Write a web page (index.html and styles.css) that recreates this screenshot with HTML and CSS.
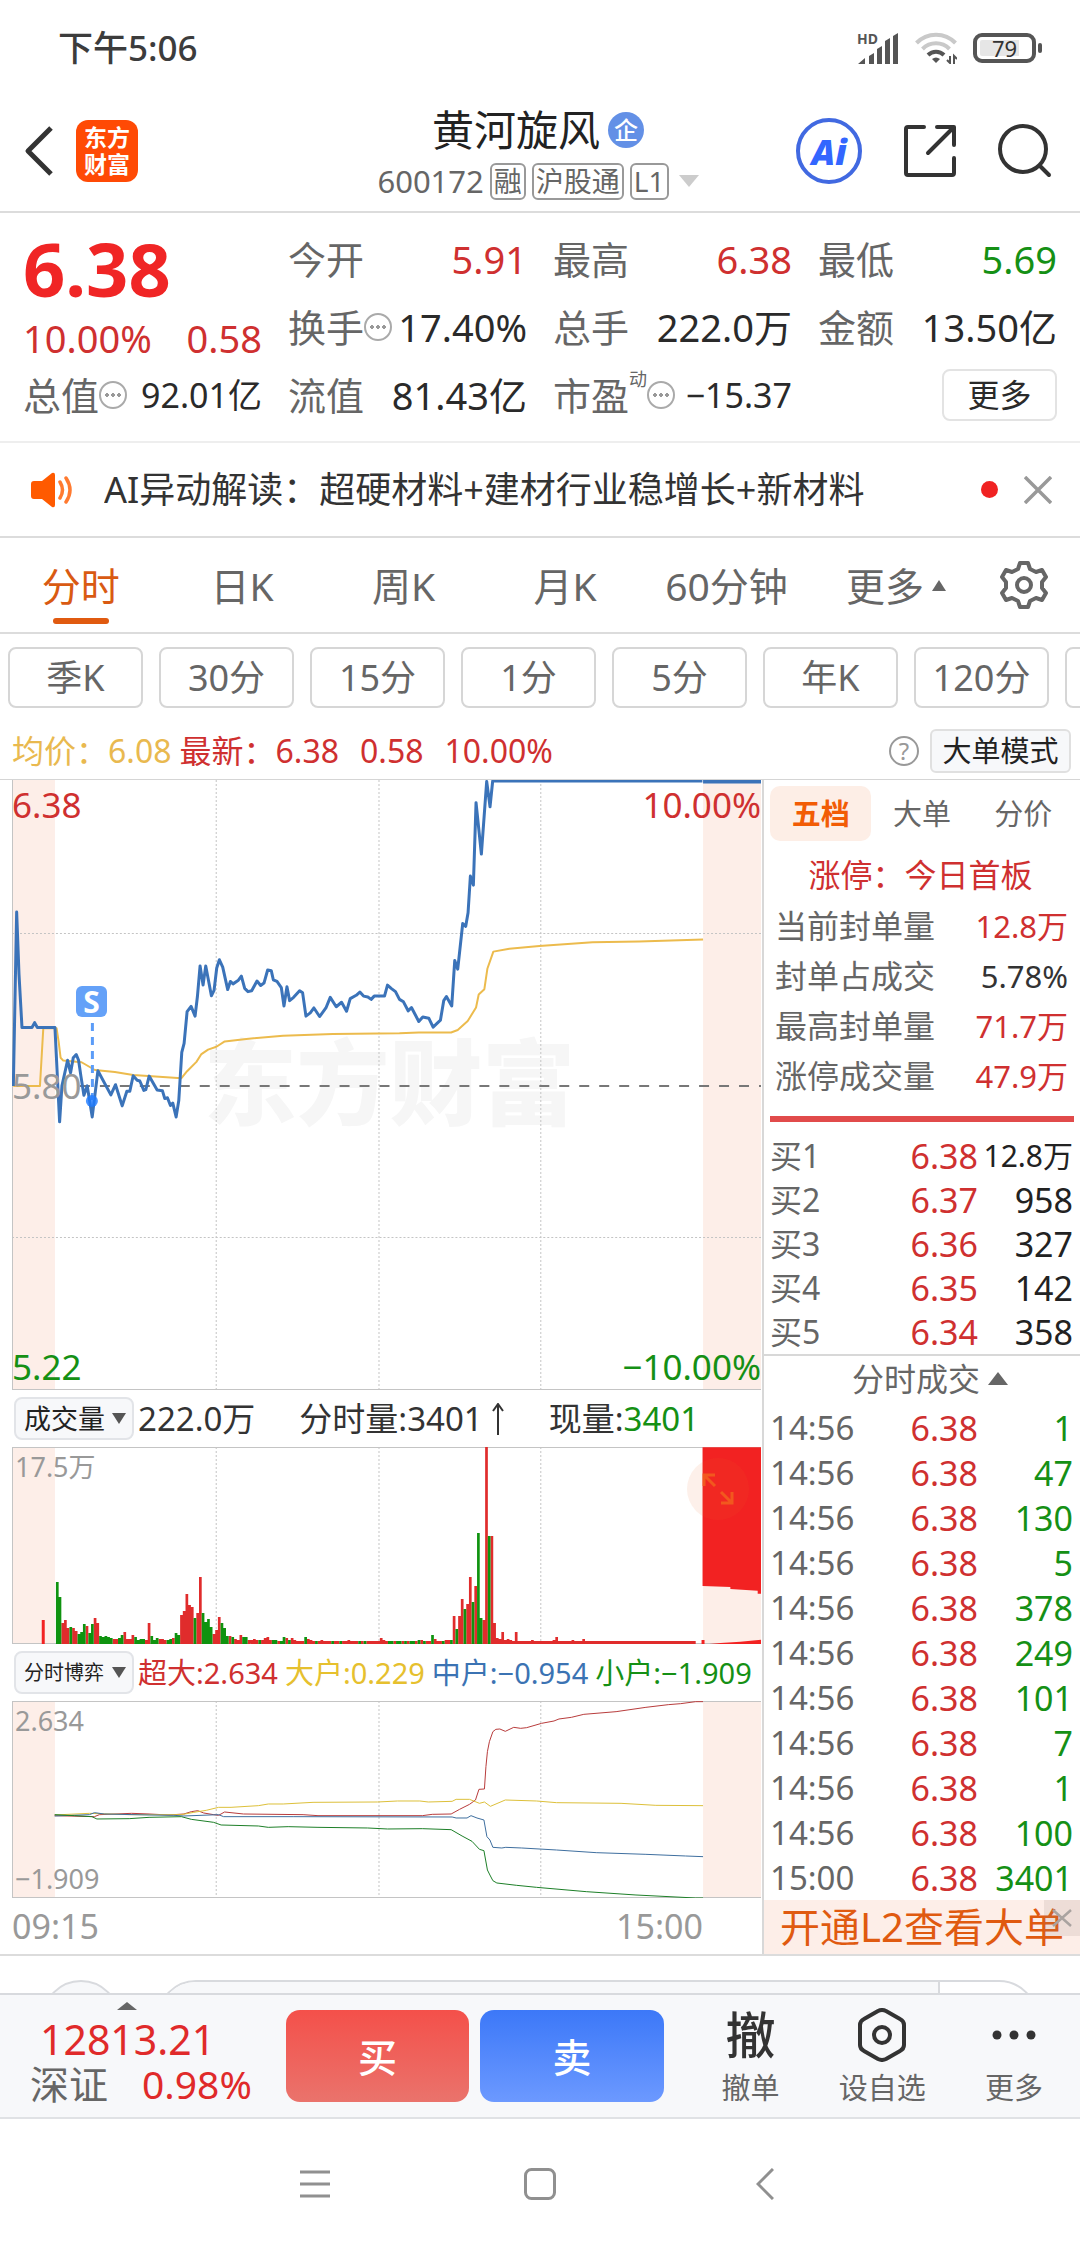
FILE: index.html
```html
<!DOCTYPE html>
<html lang="zh-CN">
<head>
<meta charset="utf-8">
<meta name="viewport" content="width=device-width, initial-scale=1">
<title>黄河旋风 600172</title>
<link rel="stylesheet" href="styles.css">
</head>
<body>
<div class="status">
  <span class="status-time">下午5:06</span>
  <div class="status-icons">
    <svg width="42" height="34" viewBox="0 -2 42 34"><text x="0" y="11" class="hd">HD</text><g fill="#555"><path d="M1 31l7-6v6zM12 31v-8l5-3v11zM20 31V16l5-3v18zM28 31V8l5-3v26zM36 31V3l5-3v31z"/></g></svg>
    <svg width="42" height="32" viewBox="0 0 42 32" fill="none" stroke-width="4"><path d="M1.500 11a27 27 0 0 1 39 0M7.500 17a19 19 0 0 1 27 0" stroke="#c9c9c9"/><path d="M13 23a11.500 11.500 0 0 1 16 0" stroke="#555"/><path d="M17 27q4-3 8 0l-4 4z" fill="#555"/><path d="M35 24v7l-3-3M39 32v-8l3 3" stroke="#555" stroke-width="2"/></svg>
    <div class="battery"><span>79</span></div>
  </div>
</div>

<header class="header">
  <div class="header-left">
    <button class="icon-btn" aria-label="返回"><svg width="30" height="52" viewBox="0 0 30 52" fill="none" stroke="#333" stroke-width="5" stroke-linejoin="round"><path d="M27 3L4 26l23 23"/></svg></button>
    <div class="logo"><span>东方</span><span>财富</span></div>
  </div>
  <div class="header-title">
    <h1>黄河旋风<span class="badge">企</span></h1>
    <div class="code"><span class="code-num">600172</span><span class="tag">融</span><span class="tag">沪股通</span><span class="tag">L1</span><i class="tri-down"></i></div>
  </div>
  <div class="header-right">
    <button class="icon-btn ai">Ai</button>
    <button class="icon-btn" aria-label="分享"><svg width="52" height="52" viewBox="0 0 52 52" fill="none" stroke="#333" stroke-width="4" stroke-linecap="round" stroke-linejoin="round"><path d="M20 2H4a2 2 0 0 0-2 2v44a2 2 0 0 0 2 2h44a2 2 0 0 0 2-2V33M33 2h17v18M49 3L24 28"/></svg></button>
    <button class="icon-btn" aria-label="搜索"><svg width="54" height="54" viewBox="0 0 54 54" fill="none" stroke="#333" stroke-width="4" stroke-linecap="round"><circle cx="25" cy="25" r="23"/><path d="M42 42l9 9"/></svg></button>
  </div>
</header>

<section class="quote">
  <div class="price-box">
    <div class="price">6.38</div>
    <div class="change"><span>10.00%</span><span>0.58</span></div>
  </div>
  <div class="cell"><span class="k">今开</span><span class="v red">5.91</span></div>
  <div class="cell"><span class="k">最高</span><span class="v red">6.38</span></div>
  <div class="cell"><span class="k">最低</span><span class="v green">5.69</span></div>
  <div class="cell"><span class="k">换手</span><i class="info"></i><span class="v">17.40%</span></div>
  <div class="cell"><span class="k">总手</span><span class="v">222.0万</span></div>
  <div class="cell"><span class="k">金额</span><span class="v">13.50亿</span></div>
  <div class="cell"><span class="k">总值</span><i class="info"></i><span class="v small">92.01亿</span></div>
  <div class="cell"><span class="k">流值</span><span class="v">81.43亿</span></div>
  <div class="cell"><span class="k">市盈</span><span class="sup">动</span><i class="info"></i><span class="v small">−15.37</span></div>
  <div class="cell cell-end"><button class="more-btn">更多</button></div>
</section>

<section class="news">
  <svg width="42" height="36" viewBox="0 0 42 36"><path d="M3 9h8L21 1q3-1 3 2v30q0 3-3 2L11 27H3q-3 0-3-3V12q0-3 3-3z" fill="#ff5a00"/><path d="M29 10q5 8 0 16M35 6q8 12 0 24" fill="none" stroke="#ff7a30" stroke-width="3.500" stroke-linecap="round"/></svg>
  <a class="news-text" href="#">AI异动解读：超硬材料+建材行业稳增长+新材料</a>
  <i class="dot"></i>
  <button class="icon-btn" aria-label="关闭"><svg width="28" height="28" viewBox="0 0 28 28" stroke="#999" stroke-width="3.500"><path d="M1 1l26 26M27 1L1 27"/></svg></button>
</section>

<nav class="tabs">
  <button class="tab active">分时</button>
  <button class="tab">日K</button>
  <button class="tab">周K</button>
  <button class="tab">月K</button>
  <button class="tab">60分钟</button>
  <button class="tab tab-more">更多<i class="tri-up small-tri"></i></button>
  <button class="tab gear" aria-label="设置"><svg width="48" height="50" viewBox="0 0 48 50" fill="none" stroke="#666" stroke-width="4" stroke-linejoin="round"><path d="M20 3h8l2 6 6 3 6-2 4 7-4 5v6l4 5-4 7-6-2-6 3-2 6h-8l-2-6-6-3-6 2-4-7 4-5v-6l-4-5 4-7 6 2 6-3z"/><circle cx="24" cy="25" r="7"/></svg></button>
</nav>

<div class="chips">
  <button class="chip">季K</button><button class="chip">30分</button><button class="chip">15分</button><button class="chip">1分</button><button class="chip">5分</button><button class="chip">年K</button><button class="chip">120分</button><button class="chip" aria-label="更多周期"></button>
</div>

<div class="legend">
  <span class="gold">均价：6.08</span>
  <span class="red legend-last"><span>最新：6.38</span><span>0.58</span><span>10.00%</span></span>
  <span class="help">?</span>
  <button class="mode-btn">大单模式</button>
</div>

<main class="main">
  <section class="left">
    <div class="plot plot-price">
      <svg viewBox="0 0 750 610" preserveAspectRatio="none">
        <rect x="0" y="0" width="43" height="610" fill="#fdeee8"/><rect x="692" y="0" width="58" height="610" fill="#fdeee8"/>
        <text x="192" y="338" class="watermark">东方财富</text>
        <path class="grid" d="M0 153.500H750M0 457.500H750M204.500 0V610M367.500 0V610M529.500 0V610"/>
        <path d="M68 306H750" stroke="#777" stroke-width="2" stroke-dasharray="10 10"/>
        <path class="frame" d="M.5 0V610"/><path class="frame" d="M0 609.500H750"/>
        <g transform="translate(-12 -10) scale(.33333 .40816)" fill="none">
          <path class="line" stroke="#ecbb4d" stroke-width="2" d="M40 774L120 774 130 633 170 633 176 665 182 705 190 712 245 716 285 735 345 740 400 747 545 755 562 738 590 715 605 696 625 685 650 678 675 665 740 659 850 651 1000 647 1200 645 1258 643 1355 643 1375 637 1405 615 1430 582 1438 550 1455 537 1464 487 1482 445 1530 438 1620 431 1780 422 1920 420 2040 417 2112 415"/>
          <path class="line" stroke="#3b73b9" stroke-width="3" d="M40 774L50 348 57 500 66 631 96 631 104 619 112 631 165 631 179 862 186 774 203 711 212 742 220 705 229 697 236 711 243 750 252 797 262 774 277 850 294 737 333 796 347 771 367 823 381 787 390 787 400 749 412 760 420 762 432 785 438 783 448 750 472 784 488 786 495 805 503 803 512 822 519 816 529 850 537 810 546 692 553 670 562 592 574 579 586 603 593 555 601 480 610 527 618 480 635 553 643 540 651 485 659 465 669 483 684 538 692 518 700 524 715 516 725 505 735 535 745 543 756 541 772 517 783 528 793 522 804 490 815 492 821 514 832 518 845 533 853 578 862 531 870 565 882 557 900 541 909 546 919 603 932 595 943 583 960 604 979 583 992 557 1010 580 1026 569 1041 591 1052 560 1070 552 1081 544 1092 554 1105 556 1115 562 1124 554 1155 554 1164 527 1175 535 1188 543 1200 562 1212 568 1226 590 1236 582 1258 616 1270 605 1288 608 1301 630 1323 613 1333 565 1341 555 1357 578 1366 467 1375 488 1390 376 1399 383 1406 350 1413 260 1422 282 1430 80 1446 206 1462 28 1472 90 1480 27 2110 27"/>
        </g>
        <path d="M692 1.500H750" stroke="#3b73b9" stroke-width="4"/>
        <path d="M80.500 243V320" stroke="#5b9cf8" stroke-width="3" stroke-dasharray="8 6"/><circle cx="80" cy="321" r="6" fill="#1e7bff" opacity=".8"/>
      </svg>
      <span class="axis tl red">6.38</span><span class="axis tr red">10.00%</span>
      <span class="axis ml">5.80</span>
      <span class="axis bl green">5.22</span><span class="axis br green">−10.00%</span>
      <span class="sell-mark">S</span>
    </div>

    <div class="sub-head">
      <button class="select-btn">成交量<i class="tri-dark"></i></button>
      <div class="vol-info"><span>222.0万</span><span>分时量:3401<svg width="14" height="32" viewBox="0 0 14 32" fill="none" stroke="#333" stroke-width="2"><path d="M7 32V1M2 8l5-7 5 7"/></svg></span><span>现量:<b class="green">3401</b></span></div>
    </div>
    <div class="plot plot-sub">
      <svg viewBox="0 0 750 197" preserveAspectRatio="none">
        <rect x="0" y="0" width="43" height="197" fill="#fdeee8"/><rect x="692" y="0" width="58" height="197" fill="#fdeee8"/>
        <path class="grid" d="M204.500 0V197M367.500 0V197M529.500 0V197"/>
        <path class="frame" d="M.5 0V197M0 .5H750M0 196.500H750"/>
        <path id="bars-up" fill="#e02c2c"/><path id="bars-down" fill="#0f930f"/>
        <g transform="translate(-12 -67) scale(.4975 .33333)" fill="#f22222">
          <path d="M1414 202V618L1470 621V627L1525 632V641H1533V202zM1420 793L1450 789 1490 785 1533 779V793zM84 793V720h6V793zM1412 793V780h6V793z"/>
        </g>
      </svg>
      <span class="axis-note top">17.5万</span>
      <button class="expand" aria-label="全屏"><svg width="32" height="32" viewBox="0 0 32 32" fill="none" stroke="#f2661e" stroke-width="3"><path d="M13 13L2 2M2 13V2h11M19 19l11 11M19 30h11V19"/></svg></button>
    </div>

    <div class="sub-head">
      <button class="select-btn tight">分时博弈<i class="tri-dark"></i></button>
      <div class="game-info"><span class="red">超大:2.634</span><span class="yellow">大户:0.229</span><span class="blue">中户:−0.954</span><span class="green">小户:−1.909</span></div>
    </div>
    <div class="plot plot-sub">
      <svg viewBox="0 0 750 197" preserveAspectRatio="none">
        <rect x="0" y="0" width="43" height="197" fill="#fdeee8"/><rect x="692" y="0" width="58" height="197" fill="#fdeee8"/>
        <path class="grid" d="M204.500 0V197M367.500 0V197M529.500 0V197"/>
        <path class="frame" d="M.5 0V197M0 .5H750M0 196.500H750"/>
        <g transform="translate(-12 -61) scale(.4975 .33333)" fill="none">
          <path class="line" stroke="#b83c3c" d="M110 527L190 530 200 524 265 520 300 522 340 525 370 522 385 515 398 512 410 519 430 524 440 526 452 516 490 522 610 524 640 527 850 527 870 523 908 522 925 508 945 493 957 480 964 448 975 447 978 380 981 335 985 305 992 275 998 268 1006 267 1017 274 1034 262 1048 265 1060 263 1090 250 1115 243 1125 237 1150 232 1175 223 1240 215 1300 202 1345 194 1370 191 1400 185 1415 185"/>
          <path class="line" stroke="#ddc03a" d="M110 525L180 520 260 524 365 524 390 517 415 511 440 502 465 502 520 497 540 492 570 492 630 487 760 486 800 483 845 483 862 486 910 484 918 478 945 478 965 490 975 486 987 499 1017 480 1080 483 1120 488 1250 490 1320 496 1415 497"/>
          <path class="line" stroke="#3f6f9f" d="M110 528L180 524 190 518 210 522 300 525 350 526 370 528 440 524 450 530 590 530 910 531 918 534 940 534 948 527 960 534 974 540 980 590 986 600 992 622 1010 624 1018 622 1050 624 1120 630 1200 638 1300 643 1380 648 1415 650"/>
          <path class="line" stroke="#1d7f28" d="M110 524L150 527 185 530 195 537 260 536 300 532 365 530 385 538 430 547 445 555 520 558 540 562 580 560 640 562 740 564 780 567 850 566 908 569 930 588 950 604 965 628 974 632 981 690 986 705 992 722 1000 729 1040 736 1080 742 1180 755 1280 765 1400 774 1415 774"/>
        </g>
      </svg>
      <span class="axis-note top">2.634</span><span class="axis-note bottom">−1.909</span>
    </div>
    <div class="time-axis"><span>09:15</span><span>15:00</span></div>
  </section>

  <aside class="right">
    <div class="depth-tabs"><button class="depth-tab active">五档</button><button class="depth-tab">大单</button><button class="depth-tab">分价</button></div>
    <div class="limit">涨停：今日首板</div>
    <table class="seal">
      <tr><th>当前封单量</th><td class="red">12.8万</td></tr>
      <tr><th>封单占成交</th><td>5.78%</td></tr>
      <tr><th>最高封单量</th><td class="red">71.7万</td></tr>
      <tr><th>涨停成交量</th><td class="red">47.9万</td></tr>
    </table>
    <div class="bar"></div>
    <table class="bids">
      <tr><th>买1</th><td class="red">6.38</td><td class="long">12.8万</td></tr>
      <tr><th>买2</th><td class="red">6.37</td><td>958</td></tr>
      <tr><th>买3</th><td class="red">6.36</td><td>327</td></tr>
      <tr><th>买4</th><td class="red">6.35</td><td>142</td></tr>
      <tr><th>买5</th><td class="red">6.34</td><td>358</td></tr>
    </table>
    <button class="ticks-head">分时成交<i class="tri-up"></i></button>
    <table class="ticks">
      <tr><th>14:56</th><td class="red">6.38</td><td class="green">1</td></tr>
      <tr><th>14:56</th><td class="red">6.38</td><td class="green">47</td></tr>
      <tr><th>14:56</th><td class="red">6.38</td><td class="green">130</td></tr>
      <tr><th>14:56</th><td class="red">6.38</td><td class="green">5</td></tr>
      <tr><th>14:56</th><td class="red">6.38</td><td class="green">378</td></tr>
      <tr><th>14:56</th><td class="red">6.38</td><td class="green">249</td></tr>
      <tr><th>14:56</th><td class="red">6.38</td><td class="green">101</td></tr>
      <tr><th>14:56</th><td class="red">6.38</td><td class="green">7</td></tr>
      <tr><th>14:56</th><td class="red">6.38</td><td class="green">1</td></tr>
      <tr><th>14:56</th><td class="red">6.38</td><td class="green">100</td></tr>
      <tr><th>15:00</th><td class="red">6.38</td><td class="green">3401</td></tr>
    </table>
    <div class="promo"><a href="#">开通L2查看大单</a><button class="promo-close" aria-label="关闭"><svg width="20" height="18" viewBox="0 0 20 18" stroke="#a9a3a0" stroke-width="2.500"><path d="M1 1l18 16M19 1L1 17"/></svg></button></div>
  </aside>
</main>

<div class="peek"><div class="peek-circle"></div><div class="peek-pill"><div class="peek-fill"></div></div></div>

<footer class="trade">
  <div class="index">
    <i class="tri-up index-tri"></i>
    <div class="index-value">12813.21</div>
    <div class="index-row"><span>深证</span><span class="index-pct">0.98%</span></div>
  </div>
  <div class="trade-btns"><button class="buy">买</button><button class="sell">卖</button></div>
  <div class="actions">
    <button class="action"><span class="action-icon">撤</span><span>撤单</span></button>
    <button class="action"><span class="action-icon"><svg width="48" height="54" viewBox="0 0 48 54" fill="none" stroke="#333" stroke-width="4" stroke-linejoin="round"><path d="M20 3q4-2 8 0l14 8q4 2 4 6v20q0 4-4 6l-14 8q-4 2-8 0L6 43q-4-2-4-6V17q0-4 4-6z"/><circle cx="24" cy="27" r="8"/></svg></span><span>设自选</span></button>
    <button class="action"><span class="action-icon"><svg width="44" height="10" viewBox="0 0 44 10" fill="#333"><circle cx="5" cy="5" r="4.500"/><circle cx="22" cy="5" r="4.500"/><circle cx="39" cy="5" r="4.500"/></svg></span><span>更多</span></button>
  </div>
</footer>

<nav class="sys-nav">
  <button class="icon-btn" aria-label="菜单"><svg width="30" height="32" viewBox="0 0 30 32" stroke="#909090" stroke-width="3"><path d="M0 4h30M0 16h30M0 28h30"/></svg></button>
  <button class="icon-btn" aria-label="主屏"><svg width="32" height="32" viewBox="0 0 32 32" fill="none" stroke="#909090" stroke-width="3"><rect x="1.500" y="1.500" width="29" height="29" rx="6"/></svg></button>
  <button class="icon-btn" aria-label="后退"><svg width="18" height="32" viewBox="0 0 18 32" fill="none" stroke="#909090" stroke-width="3"><path d="M17 1L2 16l15 15"/></svg></button>
</nav>
<script src="chart.js"></script>
</body>
</html>
```
FILE: chart.js
```js
// Minute volumes: positive values close up, negative values close down.
const volumes = [
  -62, -47, 21, 24, 16, -17, 16, 13, -10, -12, -20, 18, -11, -20, 26, 21, -8, -7, -8, -7,
  -6, 5, 5, -6, -9, 12, 5, 5, 9, -7, -4, -5, -5, 4, 21, -8, -4, -6, 5, 5,
  4, -4, -5, 6, -11, -9, 29, 33, 50, 39, 37, -26, 31, 67, -31, -22, -25, -17, 10, 14,
  27, -21, -16, -8, 8, -7, 5, 4, 9, -7, -7, 4, 4, 5, 4, -4, 4, 6, 7, 4,
  -4, -4, 3, -3, -7, 6, -4, 6, 4, 3, 3, 3, -7, 5, 4, 3, -3, 3, 4, 3,
  3, 3, -3, 3, 3, -3, 3, 3, 4, 3, 3, 3, -3, 3, -3, 3, 3, 3, 3, 3,
  6, 4, 3, -3, -3, 3, -3, -3, 3, -3, 3, -3, -3, 3, -4, 4, -3, 3, 3, -9,
  5, 3, 3, -3, 4, 4, -4, 28, -15, 28, 45, -35, 40, 67, -42, 58, -111, -26, 24, 197,
  -108, 108, 21, 6, 5, 12, 4, 5, 4, 3, 12, 3, 3, 3, 3, 3, 4, 3, 3, 3,
  3, 3, 3, 3, 4, 7, 3, 3, 3, 3, 3, 4, 3, 3, 3, 5, 3, 3, 3, 3,
  3, 3, 3, 3, 3, 3, 3, 3, 3, 3, 3, 3, 3, 3, 3, 3, 3, 3, 3, 3,
  3, 3, 3, 3, 3, 3, 3, 3, 3, 3, 3, 3, 3, 3, 3, 3, 3
];
const pitch = 2.703;
let up = "", down = "";
volumes.forEach((v, i) => {
  const h = Math.abs(v);
  const bar = `M${(44 + i * pitch).toFixed(2)} 197v${-h}h2.700v${h}z`;
  if (v > 0) up += bar; else down += bar;
});
document.getElementById("bars-up").setAttribute("d", up);
document.getElementById("bars-down").setAttribute("d", down);
```
FILE: styles.css
```css
* { box-sizing: border-box; }
body { margin: 0; background: #fff; color: #333; font-family: "Noto Sans", "Noto Sans CJK SC", sans-serif; font-size: 32px; line-height: 1; overflow-x: hidden; }
button { font: inherit; color: inherit; background: none; border: 0; padding: 0; margin: 0; }
a { color: inherit; text-decoration: none; }
svg { display: block; flex: none; }
table { border-collapse: collapse; width: 100%; }
th, td { padding: 0; font-weight: 400; }
.red { color: #cf3030; }
.green { color: #159015; font-weight: 400; }
.gold { color: #e9b94f; }
.yellow { color: #e6c02e; }
.blue { color: #3b73b3; }
.icon-btn { display: flex; align-items: center; justify-content: center; }

/* status bar */
.status { height: 100px; padding: 0 39px 5px 58px; display: flex; align-items: center; justify-content: space-between; }
.status-time { font-size: 35px; font-weight: 500; color: #3c3c3c; }
.status-icons { display: flex; align-items: center; gap: 16px; }
.hd { font-size: 14px; font-weight: 700; fill: #555; }
.battery { position: relative; width: 63px; height: 30px; margin-right: 5px; padding: 3px; border: 4px solid #555; border-radius: 9px; display: flex; align-items: center; justify-content: center; font-size: 22px; background: linear-gradient(90deg, #e6e6e6 79%, #fff 79%) content-box; }
.battery::after { content: ""; position: absolute; right: -10px; top: 6px; width: 4px; height: 10px; border-radius: 2px; background: #555; }

/* header */
.header { display: grid; grid-template-columns: 1fr auto 1fr; align-items: center; height: 113px; padding: 0 28px 0 24px; border-bottom: 2px solid #dcdcdc; }
.header-left { display: flex; align-items: center; gap: 22px; padding-bottom: 9px; }
.logo { width: 62px; height: 62px; border-radius: 12px; background: #ff4a05; color: #fff; font-size: 23px; line-height: 27px; font-weight: 700; display: flex; flex-direction: column; align-items: center; justify-content: center; }
.header-title { display: flex; flex-direction: column; align-items: center; gap: 12px; padding-bottom: 3px; }
h1 { margin: 0; font-size: 42px; line-height: 42px; font-weight: 400; color: #222; display: flex; align-items: center; gap: 8px; }
.badge { width: 36px; height: 36px; border-radius: 50%; background: #6390e6; color: #fff; font-size: 24px; line-height: 36px; text-align: center; font-weight: 500; }
.code { display: flex; align-items: center; gap: 6px; color: #666; }
.code-num { font-size: 31px; }
.tag { border: 2px solid #999; border-radius: 6px; font-size: 28px; height: 37px; line-height: 33px; padding: 0 2px; }
.tri-down { border: 10px solid transparent; border-top: 12px solid #ccc; border-bottom: 0; margin-left: 4px; }
.header-right { display: flex; align-items: center; justify-content: flex-end; gap: 42px; padding-bottom: 9px; }
.ai { width: 66px; height: 66px; border: 4px solid #4169e1; border-radius: 50%; color: #3366ff; font-size: 35px; font-weight: 900; font-style: italic; }

/* quote grid */
.quote { display: grid; grid-template-columns: repeat(4, minmax(0, 1fr)); grid-auto-rows: 68px; column-gap: 26px; padding: 12px 23px 12px; border-bottom: 2px solid #eee; }
.price-box { grid-row: span 2; display: flex; flex-direction: column; justify-content: space-between; padding: 7px 0 4px; }
.price { font-size: 74px; line-height: 74px; font-weight: 700; color: #f02525; }
.change { display: flex; justify-content: space-between; font-size: 38px; line-height: 38px; color: #cf3030; }
.cell { display: flex; align-items: center; font-size: 38px; color: #2a2a2a; white-space: nowrap; }
.k { color: #666; }
.v { margin-left: auto; }
.v.red { color: #cf3030; }
.v.green { color: #159015; }
.small { font-size: 34px; }
.info { flex: none; width: 28px; height: 28px; border: 2px solid #aaa; border-radius: 50%; background: radial-gradient(circle at 6px 12px, #999 2px, transparent 2px), radial-gradient(circle at 12px 12px, #999 2px, transparent 2px), radial-gradient(circle at 18px 12px, #999 2px, transparent 2px); }
.sup { align-self: flex-start; font-size: 18px; line-height: 36px; color: #666; }
.cell-end { justify-content: flex-end; }
.more-btn { width: 115px; height: 52px; border: 2px solid #e3e3e3; border-radius: 8px; font-size: 32px; }

/* news */
.news { display: flex; align-items: center; height: 95px; padding: 0 28px 0 31px; border-bottom: 2px solid #dcdcdc; font-size: 36px; }
.news-text { margin-left: 31px; flex: 1; white-space: nowrap; overflow: hidden; line-height: 48px; }
.dot { width: 17px; height: 17px; border-radius: 50%; background: #f02222; margin-right: 26px; }

/* period tabs */
.tabs { display: grid; grid-template-columns: repeat(6, minmax(0, 161fr)) minmax(0, 111fr); height: 96px; border-bottom: 2px solid #dcdcdc; font-size: 39px; color: #666; }
.tab { position: relative; display: flex; align-items: center; justify-content: center; white-space: nowrap; }
.tab.active { color: #d95a12; }
.tab.active::after { content: ""; position: absolute; bottom: 8px; width: 56px; height: 6px; border-radius: 3px; background: #e05a10; }
.tab-more { padding-left: 16px; }
.tri-up { border: 10px solid transparent; border-bottom: 13px solid #666; border-top: 0; margin-left: 8px; }
.small-tri { border-width: 0 7px 11px; }

.chips { display: flex; gap: 16px; padding: 13px 0 0 8px; overflow: hidden; }
.chip { flex: none; width: 135px; height: 61px; border: 2px solid #d6d6d6; border-radius: 8px; font-size: 36px; color: #666; }

.legend { display: flex; align-items: center; height: 72px; padding: 14px 9px 0 12px; border-bottom: 1px solid #d5d5d5; white-space: nowrap; }
.legend-last { display: flex; gap: 21px; margin-left: 8px; }
.help { margin-left: auto; width: 30px; height: 30px; border: 2px solid #999; border-radius: 50%; color: #999; font-size: 24px; line-height: 26px; text-align: center; }
.mode-btn { margin-left: 11px; width: 141px; height: 44px; border: 2px solid #e0e0e0; border-radius: 6px; background: #f7f8fa; font-size: 29px; color: #222; }

/* charts */
.main { display: grid; grid-template-columns: minmax(0, 764fr) minmax(0, 316fr); border-bottom: 2px solid #dcdcdc; }
.left { padding: 0 1px 0 12px; border-right: 2px solid #d8d8d8; }
.plot { position: relative; }
.plot > svg { width: 100%; height: 100%; }
.plot-price { height: 610px; }
.plot-sub { height: 197px; }
.grid { stroke: #c4c4c4; stroke-width: 1; stroke-dasharray: 2 2; fill: none; }
.frame { stroke: #c4c4c4; stroke-width: 1; fill: none; }
.line { vector-effect: non-scaling-stroke; stroke-linejoin: round; }
.watermark { font-size: 93px; font-weight: 900; fill: #f6f6f6; }
.axis { position: absolute; font-size: 35px; line-height: 42px; }
.tl, .bl, .ml { left: 0; }
.tr, .br { right: 0; }
.tl, .tr { top: 4px; }
.bl, .br { bottom: 2px; }
.ml { top: 285px; color: #999; }
.sell-mark { position: absolute; left: 64px; top: 206px; width: 31px; height: 31px; border-radius: 6px; background: #64a1f8; color: #fff; font-size: 30px; line-height: 31px; font-weight: 700; text-align: center; }
.sub-head { display: flex; align-items: center; height: 57px; white-space: nowrap; }
.select-btn { flex: none; width: 120px; height: 43px; margin: 0 4px 0 2px; border: 2px solid #e2e4e8; border-radius: 8px; background: #f7f8fa; display: flex; align-items: center; justify-content: space-between; padding: 0 6px 0 8px; font-size: 27px; color: #222; }
.select-btn.tight { font-size: 20px; }
.tri-dark { border: 7px solid transparent; border-top: 11px solid #555; border-bottom: 0; }
.vol-info { flex: 1; display: flex; gap: 44px; font-size: 33px; }
.vol-info span { display: flex; align-items: center; }
.vol-info svg { margin-left: 8px; }
.game-info { flex: 1; display: flex; gap: 7px; font-size: 29px; }
.axis-note { position: absolute; left: 3px; color: #999; font-size: 27px; line-height: 32px; }
.top { top: 4px; }
.bottom { bottom: 3px; }
.expand { position: absolute; right: 12px; top: 11px; width: 62px; height: 62px; border-radius: 50%; background: rgba(240, 110, 40, .12); display: flex; align-items: center; justify-content: center; opacity: .8; }
.time-axis { display: flex; justify-content: space-between; height: 56px; align-items: center; padding-right: 58px; font-size: 34px; color: #999; }

/* order book */
.depth-tabs { display: grid; grid-template-columns: repeat(3, 1fr); margin: 6px 6px 0 6px; font-size: 29px; color: #666; }
.depth-tab { height: 55px; border-radius: 10px; }
.depth-tab.active { background: #fdeee6; color: #f25c05; font-weight: 700; }
.limit { text-align: center; color: #cf3030; line-height: 40px; padding: 14px 3px 6px 0; }
.seal { width: auto; margin: 0 12px 0 11px; min-width: calc(100% - 23px); }
.seal tr { height: 50px; }
.seal th { text-align: left; color: #666; font-size: 32px; }
.seal td { text-align: right; font-size: 31px; }
.bar { height: 6px; margin: 15px 6px 12px; background: #e14b4b; }
.bids { table-layout: fixed; }
.bids tr { height: 44px; }
.bids th, .ticks th { width: 35%; text-align: left; color: #666; padding-left: 6px; }
.bids td, .ticks td { text-align: right; font-size: 34px; padding-right: 7px; }
.bids td:nth-child(2), .ticks td:nth-child(2) { width: 34%; padding-right: 4px; }
.bids td:last-child { color: #222; }
.bids .long { font-size: 30px; white-space: nowrap; padding-left: 0; }
.ticks-head { display: flex; width: 100%; height: 51px; align-items: center; justify-content: center; border-top: 2px solid #d8d8d8; color: #666; padding: 0 0 4px 16px; }
.ticks { table-layout: fixed; }
.ticks tr { height: 45px; }
.ticks th { font-size: 33px; }
.promo { position: relative; height: 54px; background: #fdeee8; color: #e05a10; font-size: 40px; line-height: 54px; text-align: center; white-space: nowrap; }
.promo-close { position: absolute; right: 0; top: 0; width: 36px; height: 36px; background: rgba(150, 130, 120, .15); display: flex; align-items: center; justify-content: center; }

/* comment bar, cut off by the trade bar */
.peek { display: flex; gap: 37px; height: 37px; padding: 24px 42px 0; overflow: hidden; }
.peek-circle { flex: none; width: 78px; height: 78px; border-radius: 50%; border: 2px solid #d8dade; background: #f7f8fa; }
.peek-pill { flex: 1; height: 78px; border-radius: 39px; border: 2px solid #d8dade; overflow: hidden; }
.peek-fill { width: 89%; height: 100%; background: #f7f8fa; border-right: 2px solid #d8dade; }

.trade { display: flex; align-items: center; height: 126px; background: #f7f8fa; border-top: 2px solid #d8dade; border-bottom: 2px solid #e0e2e5; }
.index { position: relative; width: 26%; height: 100%; padding: 20px 29px 0 30px; display: flex; flex-direction: column; align-items: stretch; color: #e02a2a; }
.index-tri { position: absolute; left: 117px; top: 7px; margin: 0; border-width: 0 10px 8px; }
.index-value { font-size: 41px; line-height: 48px; padding-left: 10px; }
.index-row { display: flex; justify-content: space-between; font-size: 39px; line-height: 42px; color: #666; }
.index-pct { color: #e02a2a; }
.trade-btns { width: 36%; display: grid; grid-template-columns: 1fr 1fr; gap: 11px; padding: 0 6px 0 5px; }
.trade-btns button { height: 92px; border-radius: 14px; color: #fff; font-size: 39px; font-weight: 500; }
.buy { background: linear-gradient(#f4504a, #ea736c); }
.sell { background: linear-gradient(#3c78f8, #6c99ff); }
.actions { flex: 1; display: grid; grid-template-columns: repeat(3, 1fr); padding: 0 0 3px 15px; }
.action { display: flex; flex-direction: column; align-items: center; gap: 10px; font-size: 29px; color: #666; }
.action-icon { height: 56px; display: flex; align-items: center; font-size: 50px; font-weight: 500; color: #333; }

.sys-nav { display: flex; justify-content: center; align-items: center; gap: 193px; height: 129px; }
.sys-nav .icon-btn { width: 32px; }
```
